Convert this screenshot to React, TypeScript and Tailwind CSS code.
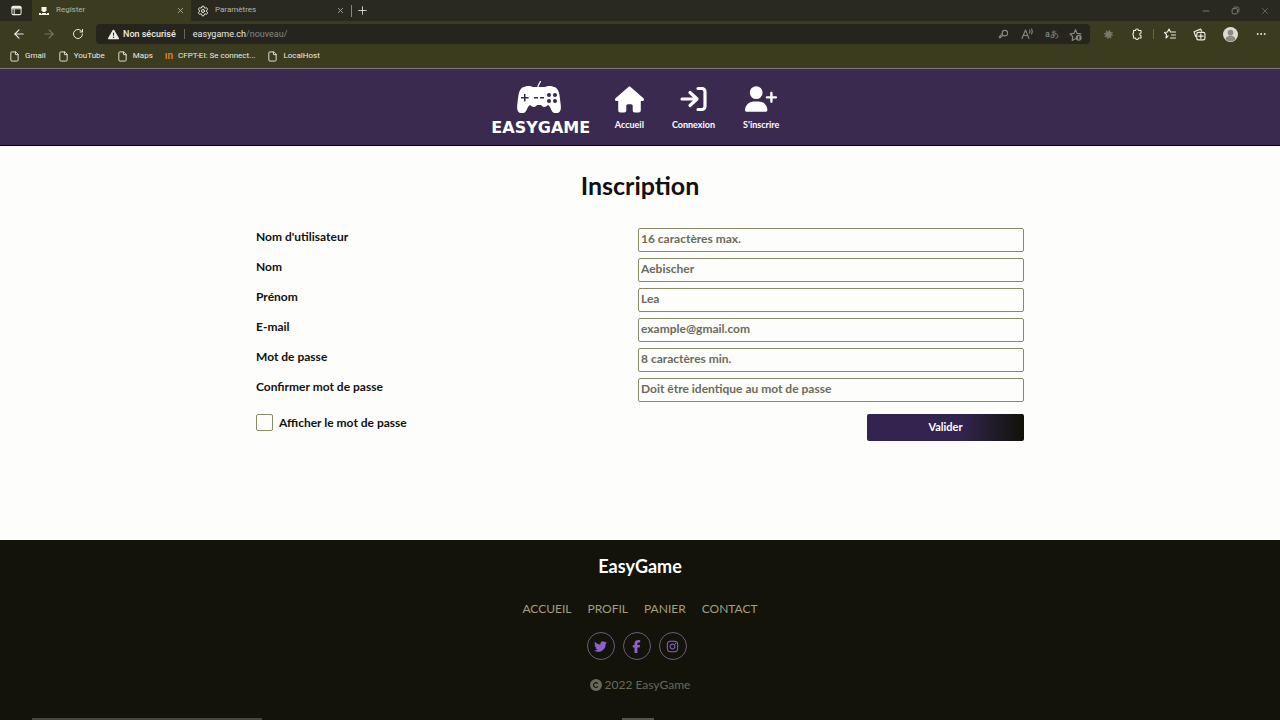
import React from "react";
import {
  FaHouse, FaTwitter, FaFacebookF, FaInstagram, FaCopyright, FaUserPlus, FaTriangleExclamation,
} from "react-icons/fa6";
import { X, Plus, Settings, ArrowLeft, ArrowRight, RotateCw, File, Minus, Ellipsis } from "lucide-react";

type LineProps = { size?: number; children: React.ReactNode };

function Line({ size = 12, children }: LineProps) {
  return (
    <svg width={size} height={size} viewBox="0 0 24 24" fill="none" stroke="currentColor" strokeWidth="2.2" strokeLinecap="round" strokeLinejoin="round" aria-hidden="true">
      {children}
    </svg>
  );
}

function Tab({ icon, title, active, width }: { icon: React.ReactNode; title: string; active?: boolean; width: string }) {
  return (
    <div className={`flex h-full items-center gap-1.5 pr-1.5 pl-1.5 ${width} ${active ? "bg-[#3b3b20]" : ""}`}>
      {icon}
      <span className="grow text-[#b5b5a8]">{title}</span>
      <button aria-label={`Fermer ${title}`} className="text-[#c0c0b4]"><X size={9} /></button>
    </div>
  );
}

function Chrome() {
  const bookmarks = ["Gmail", "YouTube", "Maps", "CFPT-EI: Se connect...", "LocalHost"];
  return (
    <header className="h-[69px] border-b border-[#77777f] bg-[#3b3b20] font-['Roboto',sans-serif] text-[8px] text-[#ecece2]">
      <div className="flex h-[21px] items-center bg-[#29291f]">
        <button aria-label="Onglets" className="flex w-8 justify-center">
          <Line size={11}><rect x="2" y="3" width="20" height="18" rx="3" /><path d="M2 8h20M7 8v13M2 5.500h20" /></Line>
        </button>
        <Tab active width="w-[159px]" title="Register" icon={<SiteMark />} />
        <Tab width="w-[160px]" title="Paramètres" icon={<Settings size={12} />} />
        <div className="h-3 w-px bg-[#88887a]" />
        <button aria-label="Nouvel onglet" className="px-1"><Plus size={13} strokeWidth={1.5} /></button>
        <div className="ml-auto flex items-center gap-5 px-2.5 text-[#88887c]">
          <button aria-label="Réduire"><Minus size={10} /></button>
          <button aria-label="Restaurer">
            <Line size={9}><rect x="3" y="7" width="14" height="14" rx="3" /><path d="M8 3h9a4 4 0 0 1 4 4v9" /></Line>
          </button>
          <button aria-label="Fermer"><X size={10} strokeWidth={1.5} /></button>
        </div>
      </div>
      <div className="flex h-[26px] items-center">
        <nav className="flex w-24 items-center gap-4 pl-3">
          <button aria-label="Retour"><ArrowLeft size={14} /></button>
          <button aria-label="Suivant" className="text-[#77776a]"><ArrowRight size={14} /></button>
          <button aria-label="Actualiser"><RotateCw size={12} /></button>
        </nav>
        <div className="flex h-5 grow items-center rounded-sm bg-[#25251e] pr-2 pl-3">
          <FaTriangleExclamation size={11} />
          <span className="ml-1 text-[9px] font-medium">Non sécurisé</span>
          <span className="mx-2 h-2.5 w-px bg-[#66665a]" />
          <span className="text-[9px]">easygame.ch<span className="text-[#88887a]">/nouveau/</span></span>
          <div className="ml-auto flex items-center gap-3 text-[#88887a]">
            <Line size={11}><circle cx="15" cy="9" r="6" /><path d="M11 14l-2 2H6v3H3v-3l7-6" /></Line>
            <Line><path d="M2 21L9 4l7 17M4 15h10M17 4q2 3 0 6M21 2q3 5 0 10" /></Line>
            <span className="w-3 text-[9px] leading-3 font-medium whitespace-nowrap">aあ</span>
            <Line size={13}>
              <path d="M12 20l-6 3 1-7-5-5 7-1 3-7 3 7 7 1" />
              <circle cx="18" cy="18" r="5.500" fill="currentColor" stroke="none" /><path d="M18 15.500v5" stroke="#25251e" />
            </Line>
          </div>
        </div>
        <div className="flex w-[190px] items-center justify-between pr-[13px] pl-[13px]">
          <span className="text-[#77776a]">
            <Line size={11}><circle cx="12" cy="12" r="7" fill="currentColor" strokeWidth="6" strokeDasharray="2 3.500" strokeLinecap="butt" /></Line>
          </span>
          <div className="flex items-center gap-2.5">
            <Line><path d="M5 5h4a3 3 0 0 1 6 0h5v5a2.500 2.500 0 0 0 0 5v5h-5a3 3 0 0 1-6 0H5v-5a3 3 0 0 1 0-5z" /></Line>
            <span className="h-2.5 w-px bg-[#66665a]" />
            <Line><path d="M8 16l-4 4 1-7-4-4 6-1 3-6 3 6h10M15 14h8M13 20h10" /></Line>
          </div>
          <Line size={13}><path d="M5 16l-3-9 12-5 2 4" /><rect x="7" y="8" width="15" height="14" rx="3" /><path d="M14.500 11v8M10.500 15h8" /></Line>
          <svg width="15" height="15" viewBox="0 0 24 24" aria-hidden="true">
            <circle cx="12" cy="12" r="12" fill="#dcdcd4" />
            <circle cx="12" cy="9" r="4.500" fill="#8b8b80" /><path d="M4 20q1-6 8-6t8 6q-8 6-16 0z" fill="#8b8b80" />
          </svg>
          <Ellipsis size={12} />
        </div>
      </div>
      <nav className="flex h-[18px] items-center gap-3 pl-[9px]">
        {bookmarks.map((b) => (
          <a key={b} href="#" className="flex items-center gap-[5px]">
            {b.startsWith("CFPT") ? <b className="text-[10px] leading-3 text-[#d87a25]">ın</b> : <File size={11} strokeWidth={2} />}
            {b}
          </a>
        ))}
      </nav>
    </header>
  );
}

function SiteMark() {
  return (
    <svg width="12" height="10" viewBox="0 0 12 10" fill="#f4f4ea" aria-hidden="true">
      <path d="M3.500 1h5v4h-1v1h-3V5h-1zM1 7h2v1h1V7h4v1h1V7h2v2H1z" />
    </svg>
  );
}

function Logo() {
  return (
    <a href="#" className="flex w-[100px] flex-col items-center">
      <svg width="46" height="34" viewBox="0 0 46 34" className="mr-1" aria-hidden="true">
        <path d="M22 7C22 4 24 4 24.500 1" fill="none" stroke="white" strokeWidth="1.300" />
        <path fill="white" d="M8 7C10 5.500 15 5.500 17 7H29C31 5.500 36 5.500 38 7C43 8 43.500 14 44.500 23C46 32 43 33.500 39 33C35 33 35 26 32 25C29 28 26 27 25 25H21C20 27 17 28 14 25C11 26 11 33 7 33C3 33.500 0 32 1.500 23C2.500 14 3 8 8 7Z" />
        <g fill="#37294f">
          <path d="M8 14h1.500v3h3v1.500h-3v3H8v-3H5v-1.500h3zM18 17h4v1.500h-4zM24 17h4v1.500h-4z" />
          <circle cx="33" cy="15" r="2" /><circle cx="39" cy="15" r="2" />
          <circle cx="33" cy="21" r="2" /><circle cx="39" cy="21" r="2" />
        </g>
      </svg>
      <span className="mt-1.5 font-['DejaVu_Sans',sans-serif] text-base leading-4 font-bold text-white">EASYGAME</span>
    </a>
  );
}

function NavItem({ label, children }: { label: string; children: React.ReactNode }) {
  return (
    <a href="#" className="flex flex-col items-center gap-1.5 text-[9px] leading-3 font-bold text-white">
      <span className="flex h-7 items-center">{children}</span>
      {label}
    </a>
  );
}

function EnterIcon() {
  return (
    <svg width="27" height="26" viewBox="0 0 27 26" fill="none" stroke="white" strokeWidth="3.2" strokeLinecap="round" strokeLinejoin="round" aria-hidden="true">
      <path d="M2 13h14M10 6.500l7 6.500-7 6.500M18 2.500h4a3 3 0 0 1 3 3v15a3 3 0 0 1-3 3h-4" />
    </svg>
  );
}

const fields = [
  { id: "user", label: "Nom d'utilisateur", hint: "16 caractères max.", type: "text" },
  { id: "nom", label: "Nom", hint: "Aebischer", type: "text" },
  { id: "prenom", label: "Prénom", hint: "Lea", type: "text" },
  { id: "email", label: "E-mail", hint: "example@gmail.com", type: "email" },
  { id: "pass", label: "Mot de passe", hint: "8 caractères min.", type: "password" },
  { id: "confirm", label: "Confirmer mot de passe", hint: "Doit être identique au mot de passe", type: "password" },
];

const socials = [
  { name: "Twitter", icon: <FaTwitter size={13} /> },
  { name: "Facebook", icon: <FaFacebookF size={13} /> },
  { name: "Instagram", icon: <FaInstagram size={13} /> },
];

export default function App() {
  return (
    <div className="flex min-h-screen flex-col bg-[#fdfdfb] font-['Lato',sans-serif] text-xs text-[#111]">
      <Chrome />
      <div className="flex h-[77px] items-center justify-center border-b border-black bg-[#3a2a50] pt-0.5 pr-2.5">
        <Logo />
        <nav className="ml-6 flex gap-7">
          <NavItem label="Accueil"><FaHouse size={29} /></NavItem>
          <NavItem label="Connexion"><EnterIcon /></NavItem>
          <NavItem label="S'inscrire"><FaUserPlus size={32} /></NavItem>
        </nav>
      </div>
      <main className="mx-auto w-3/5 grow pt-[23px]">
        <h1 className="text-center text-[25px] leading-8 font-bold">Inscription</h1>
        <form className="mt-[27px]">
          <div className="flex flex-col gap-1.5">
            {fields.map((f) => (
              <div key={f.id} className="grid h-6 grid-cols-[1fr_386px]">
                <label htmlFor={f.id} className="leading-[18px] font-bold">{f.label}</label>
                <input id={f.id} type={f.type} placeholder={f.hint} className="w-full rounded-xs border border-[#8a8a68] bg-transparent px-0.5 pb-0.5 font-bold placeholder:text-[#6b6b5c]" />
              </div>
            ))}
          </div>
          <div className="mt-3 flex items-start justify-between">
            <label className="flex items-center gap-1.5 font-bold">
              <input type="checkbox" className="size-[17px] appearance-none rounded-xs border border-[#8a8a68]" />
              Afficher le mot de passe
            </label>
            <button type="button" className="h-[27px] w-[157px] rounded-xs bg-linear-to-r from-[#33244f] from-60% to-[#111108] text-[11px] font-bold text-white">Valider</button>
          </div>
        </form>
      </main>
      <footer className="flex h-[180px] flex-col items-center bg-[#131309] pt-3.5">
        <h2 className="text-lg leading-6 font-bold text-white">EasyGame</h2>
        <nav className="mt-[21px] flex gap-4 leading-5 text-[#a39e80]">
          {["ACCUEIL", "PROFIL", "PANIER", "CONTACT"].map((l) => <a key={l} href="#">{l}</a>)}
        </nav>
        <div className="mt-[13px] flex gap-2 pr-[7px] text-[#8b62c8]">
          {socials.map((s) => (
            <a key={s.name} href="#" aria-label={s.name} className="flex size-7 items-center justify-center rounded-full border border-[#705a80]">{s.icon}</a>
          ))}
        </div>
        <p className="mt-[15px] flex items-center gap-[3px] leading-5 text-[#69695a]"><FaCopyright size={12} />2022 EasyGame</p>
        <div className="mt-auto flex h-0.5 w-full">
          <div className="ml-8 w-[230px] bg-[#4a4538]" />
          <div className="ml-[360px] w-8 bg-[#55554a]" />
        </div>
      </footer>
    </div>
  );
}
